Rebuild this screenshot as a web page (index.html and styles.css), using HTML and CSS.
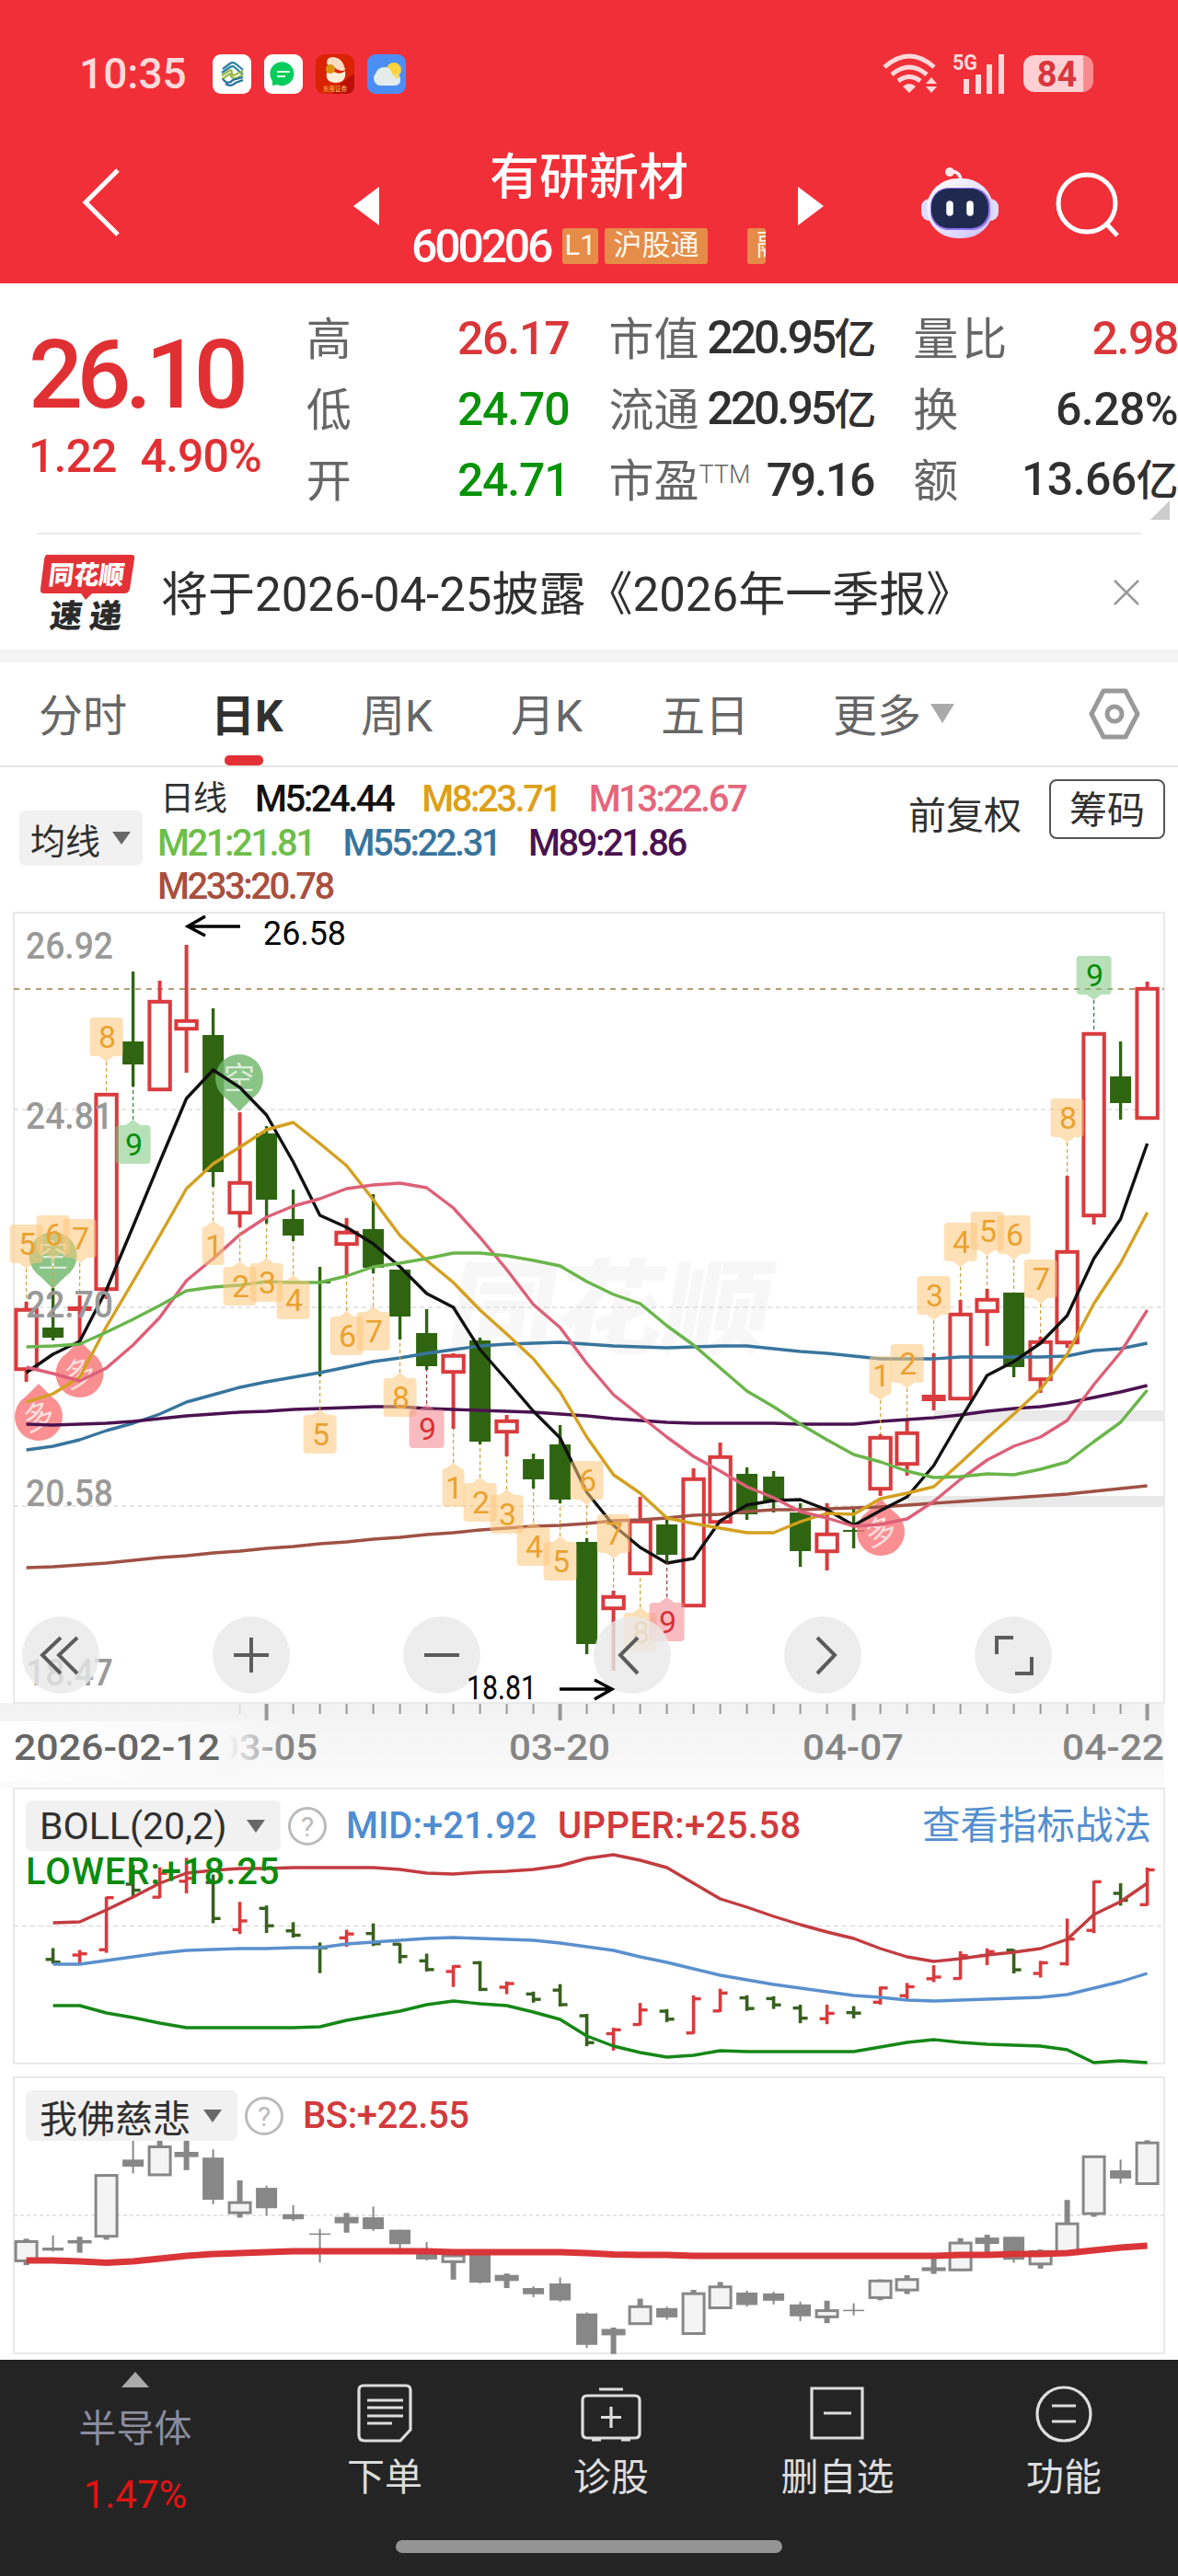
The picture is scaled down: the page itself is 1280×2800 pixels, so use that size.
FILE: index.html
```html
<!DOCTYPE html>
<html lang="zh-Hans">
<head>
    <meta charset="UTF-8">
    <meta name="viewport" content="width=device-width, initial-scale=1.0">
    <title>有研新材 600206</title>
    <link rel="stylesheet" href="styles.css">
</head>
<body>

<header class="header">
  <div class="status">
    <span class="clock">10:35</span>
    <div class="apps">
      <svg viewBox="0 0 42 43"><rect width="42" height="43" rx="9" fill="#fff"/><g fill="none" stroke-width="2.2"><path d="M11 16 19 10Q22 8 26 11L33 17M10 20 19 14Q22 12 25 15L33 22" stroke="#2880a4"/><path d="M10 23 18 18Q21 16 21 20T25 22L33 18M10 27 18 22Q20 20 20 23T26 26L33 22" stroke="#95b94a"/><path d="M11 27Q17 34 22 28L33 25M14 32Q20 36 25 31L33 28" stroke="#24709c"/></g></svg>
      <svg viewBox="0 0 42 43"><rect width="42" height="43" rx="9" fill="#fff"/><path d="M9 34V29A13 13 0 1 1 14 33Z" fill="#06cc5b"/><path d="M14 19h14M14 24h9" stroke="#d8ffe6" stroke-width="1.8"/></svg>
      <svg viewBox="0 0 42 43"><rect width="42" height="43" rx="9" fill="#d92303"/><path d="M28 31 42 21V34Q42 43 33 43H18Z" fill="#b90f08"/><path d="M12 9Q12 3 19 3Q30 4 32 17Q26 20 19 13Q13 14 12 9Z" fill="#fbdcc0"/><path d="M12 20Q14 16 20 19Q27 23 32 18Q34 31 21 31Q10 30 12 20Z" fill="#ffedd8"/><circle cx="16" cy="16" r="5" fill="#dc9410"/><text x="21" y="40" font-size="6.5" text-anchor="middle" fill="#ffc65c">东莞证券</text></svg>
      <svg viewBox="0 0 42 43"><rect width="42" height="43" rx="9" fill="#4d8ef5"/><circle cx="29" cy="17" r="8" fill="#fcd43c"/><path d="M14 34A8 8 0 0 1 9 21Q12 13 20 14Q26 15 27 21Q36 20 36 28Q36 34 29 34Z" fill="#e4ecec"/><path d="M27 21Q35 21 36 26Q30 28 27 21Z" fill="#f6dc70"/></svg>
    </div>
    <div class="signals">
      <svg width="60" height="44" viewBox="0 0 60 44" fill="none" stroke="#ffd9da" stroke-width="5"><path d="M2 15Q29-9 56 15M10 23Q29 7 48 23M17 30Q29 21 41 30"/><path d="M29 43 22 36Q29 30 36 36Z" fill="#ffd9da" stroke="none"/><path d="M47 33 53 26 59 33ZM47 36H59L53 43Z" fill="#ffd9da" stroke="none"/></svg>
      <svg width="58" height="44" viewBox="0 0 58 44" fill="#ffd9da"><text x="0" y="18" font-size="24" font-weight="700" textLength="27" lengthAdjust="spacingAndGlyphs">5G</text><path d="M12 28h6v16h-6zM25 23h6v21h-6zM37 12h6v32h-6zM50 1h6v43h-6z"/></svg>
      <span class="battery">84</span>
    </div>
  </div>
  <div class="titlebar">
    <svg class="back" viewBox="0 0 44 78"><path d="M40 4 5 39 40 74" fill="none" stroke="#fff" stroke-width="5"/></svg>
    <svg class="prev" viewBox="0 0 28 42"><path d="M28 0V42L0 21Z" fill="#fff"/></svg>
    <div class="stock">
      <div class="stock-name">有研新材</div>
      <div class="stock-sub"><b>600206</b><i class="tag l1">L1</i><i class="tag hgt">沪股通</i><i class="tag cut">融</i></div>
    </div>
    <svg class="next" viewBox="0 0 28 42"><path d="M0 0V42L28 21Z" fill="#fff"/></svg>
    <svg class="robot" viewBox="0 0 84 80"><defs><linearGradient id="face" x2="1" y2="1"><stop offset="0" stop-color="#fff"/><stop offset=".55" stop-color="#e6e0ff"/><stop offset="1" stop-color="#c9bcff"/></linearGradient></defs><path d="M43 17Q43 6 31 6" stroke="#f6e9f6" stroke-width="3.5" fill="none"/><circle cx="31" cy="7" r="5" fill="#ffe9ee"/><rect x="0" y="36" width="84" height="24" rx="9" fill="#e0dcff"/><rect x="6" y="14" width="72" height="65" rx="33" fill="url(#face)"/><rect x="10" y="24" width="65" height="46" rx="20" fill="#8c72ee"/><rect x="11" y="25" width="62" height="43" rx="19" fill="#202a50"/><path d="M31 42v9M53 42v9" stroke="#fff" stroke-width="7.5" stroke-linecap="round"/></svg>
    <svg class="search" viewBox="0 0 72 74"><circle cx="34" cy="35" r="31" fill="none" stroke="#fff" stroke-width="5"/><path d="M55 57 67 70" stroke="#fff" stroke-width="5"/></svg>
  </div>
</header>

<section class="quote">
  <div class="price">
    <div class="last">26.10</div>
    <div class="change"><span>1.22</span><span>4.90%</span></div>
  </div>
  <dl class="col c1">
    <div><dt>高</dt><dd class="up">26.17</dd></div>
    <div><dt>低</dt><dd class="down">24.70</dd></div>
    <div><dt>开</dt><dd class="down">24.71</dd></div>
  </dl>
  <dl class="col c2">
    <div><dt>市值</dt><dd>220.95<em>亿</em></dd></div>
    <div><dt>流通</dt><dd>220.95<em>亿</em></dd></div>
    <div><dt>市盈<sup>TTM</sup></dt><dd class="pe">79.16</dd></div>
  </dl>
  <dl class="col c3">
    <div><dt>量比</dt><dd class="up">2.98</dd></div>
    <div><dt>换</dt><dd>6.28%</dd></div>
    <div><dt>额</dt><dd>13.66<em>亿</em></dd></div>
  </dl>
  <span class="corner"></span>
</section>

<section class="news">
  <svg width="104" height="86" viewBox="0 0 104 86"><path d="M8 2H100Q104 2 103 7L98 39Q97 44 92 44H57L50 51 45 44H5Q0 44 1 39L5 7Q6 2 8 2Z" fill="#e33237"/><g transform="skewX(-7)" font-weight="900"><text x="13" y="34" font-size="28" fill="#fff" textLength="82" lengthAdjust="spacingAndGlyphs">同花顺</text><text x="20" y="81" font-size="35" fill="#2b2b2b" textLength="78">速递</text></g></svg>
  <p>将于2026-04-25披露《2026年一季报》</p>
  <svg width="28" height="28" viewBox="0 0 28 28"><path d="M1 1 27 27M27 1 1 27" stroke="#999" stroke-width="2.5"/></svg>
</section>

<nav class="tabs">
  <a>分时</a><a class="active">日K</a><a>周K</a><a>月K</a><a>五日</a><a class="more">更多</a>
  <svg width="56" height="56" viewBox="0 0 56 56" fill="none" stroke="#999" stroke-width="5"><path d="M16 3H40L53 28 40 53H16L3 28Z" stroke-linejoin="round"/><circle cx="28" cy="28" r="8"/></svg>
</nav>

<section class="legend">
  <span class="chip ma-chip">均线</span>
  <div class="ma">
    <div><span class="day">日线</span><span class="m5">M5:24.44</span><span class="m8">M8:23.71</span><span class="m13">M13:22.67</span></div>
    <div><span class="m21">M21:21.81</span><span class="m55">M55:22.31</span><span class="m89">M89:21.86</span></div>
    <div><span class="m233">M233:20.78</span></div>
  </div>
  <span class="fq">前复权</span>
  <span class="chouma">筹码</span>
</section>

<section class="kline">
  <svg id="kline" width="1280" height="956" viewBox="0 988 1280 956"></svg>
</section>

<section class="panel boll">
  <svg id="boll" width="1280" height="312" viewBox="0 1944 1280 312"></svg>
  <div class="panel-head">
    <span class="chip boll-chip">BOLL(20,2)</span><span class="help">?</span>
    <span class="mid">MID:+21.92</span><span class="upper">UPPER:+25.58</span>
    <a>查看指标战法</a>
  </div>
  <div class="lower">LOWER:+18.25</div>
</section>

<section class="panel bs">
  <svg id="bs" width="1280" height="309" viewBox="0 2256 1280 309"></svg>
  <div class="panel-head">
    <span class="chip bs-chip">我佛慈悲</span><span class="help">?</span>
    <span class="bs-value">BS:+22.55</span>
  </div>
</section>

<footer class="toolbar">
  <div class="items">
    <div class="sector"><i></i><span>半导体</span><b>1.47%</b></div>
    <div class="item"><svg viewBox="0 0 68 64"><path d="M11 2H57Q62 2 62 7V50L51 62H12Q6 62 6 56V7Q6 2 11 2ZM15 18H54M15 26H54M15 35H54M15 43H42"/></svg><span>下单</span></div>
    <div class="item"><svg viewBox="0 0 68 64"><path d="M21 6H47M8 13H60Q65 13 65 18V54Q65 59 60 59H8Q3 59 3 54V18Q3 13 8 13ZM34 25V48M23 36.500H45M13 61H23M45 61H55"/></svg><span>诊股</span></div>
    <div class="item"><svg viewBox="0 0 68 64"><path d="M6 5H61V59H6ZM19 32H49"/></svg><span>删自选</span></div>
    <div class="item"><svg viewBox="0 0 68 64"><circle cx="34" cy="33" r="29"/><path d="M21 24H47M21 41H47"/></svg><span>功能</span></div>
  </div>
  <div class="home"></div>
</footer>

<script src="charts.js"></script>
</body>
</html>
```
FILE: styles.css
```css
* {
  box-sizing: border-box;
}

body {
  margin: 0;
  width: 1280px;
  background: #fff;
  color: #303030;
  font-family: Roboto, "Noto Sans CJK SC", sans-serif;
}

svg {
  display: block;
  flex: none;
  overflow: visible;
}

i, em {
  font-style: normal;
}

/* 顶部 */
.header {
  height: 308px;
  background: #f12f38;
  color: #fff;
}

.status {
  display: flex;
  align-items: center;
  height: 160px;
  padding: 0 92px 0 86px;
}

.clock {
  width: 145px;
  font-size: 46px;
  font-weight: 500;
  color: #ffd9da;
}

.apps {
  display: flex;
  gap: 14px;
}

.apps svg {
  width: 42px;
  height: 43px;
}

.signals {
  display: flex;
  align-items: center;
  margin-left: auto;
  gap: 16px;
}

.signals svg + svg {
  margin-right: 3px;
}

.battery {
  width: 76px;
  height: 40px;
  padding-right: 3px;
  border-radius: 12px;
  background: linear-gradient(to right, #ffd0d3 65px, #f98b90 65px);
  color: #d9363e;
  font-size: 38px;
  font-weight: 700;
  line-height: 42px;
  text-align: center;
}

.titlebar {
  display: flex;
  height: 148px;
  padding-left: 88px;
}

.back {
  width: 44px;
  height: 78px;
  margin: 21px 252px 0 0;
}

.prev, .next {
  width: 28px;
  height: 42px;
  margin-top: 43px;
}

.stock {
  width: 455px;
}

.stock-name {
  height: 77px;
  padding-left: 1px;
  font-size: 54px;
  font-weight: 500;
  line-height: 67px;
  text-align: center;
}

.stock-sub {
  display: flex;
  align-items: center;
  height: 61px;
  padding-left: 35px;
}

.stock-sub b {
  width: 164px;
  font-size: 50px;
  font-weight: 500;
  letter-spacing: -3.2px;
}

.tag {
  height: 39px;
  margin-right: 7px;
  border-radius: 3px;
  background: #e58c49;
  color: #fff6e8;
  font-size: 31px;
  line-height: 38px;
  text-align: center;
  white-space: nowrap;
  overflow: hidden;
}

.l1 {
  width: 39px;
}

.hgt {
  width: 112px;
}

.cut {
  width: 20px;
  margin-left: 36px;
  padding-left: 10px;
  text-align: left;
}

.robot {
  width: 84px;
  height: 80px;
  margin: 20px 62px 0 106px;
}

.search {
  width: 72px;
  height: 74px;
  margin-top: 26px;
}

/* 报价 */
.quote {
  display: flex;
  position: relative;
  height: 271px;
}

.price {
  width: 333px;
  padding: 35px 0 0 31px;
  color: #e13033;
}

.last {
  height: 130px;
  font-size: 104px;
  font-weight: 500;
  line-height: 130px;
  letter-spacing: -6.6px;
}

.change {
  display: flex;
  gap: 26px;
  font-size: 50px;
  font-weight: 500;
  line-height: 46px;
  letter-spacing: -0.9px;
}

.col {
  margin: 21px 0 0;
}

.col > div {
  display: flex;
  justify-content: space-between;
  align-items: center;
  height: 77px;
}

.c1 {
  width: 286px;
  margin-right: 43px;
}

.c2 {
  width: 288px;
  margin-right: 43px;
}

.c3 {
  width: 288px;
}

dt {
  margin-top: -7px;
  color: #666;
  font-size: 49px;
  white-space: nowrap;
}

.c3 dt {
  letter-spacing: 4px;
}

dd {
  margin: 0;
  font-size: 50px;
  font-weight: 500;
  letter-spacing: -1.2px;
  line-height: 60px;
  white-space: nowrap;
}

.c2 dd {
  letter-spacing: -3px;
}

.c2 .pe {
  letter-spacing: -2.2px;
}

.c3 dd {
  letter-spacing: -0.6px;
}

.c3 .up {
  letter-spacing: -1.4px;
}

dd em {
  font-size: 46px;
}

sup {
  font-size: 27px;
  font-weight: 300;
  line-height: 0;
  vertical-align: 15px;
}

.up {
  color: #d9363a;
}

.down {
  color: #089208;
}

.corner {
  position: absolute;
  right: 9px;
  bottom: 14px;
  border-left: 21px solid transparent;
  border-bottom: 21px solid #ccc;
}

/* 公告 */
.news {
  display: flex;
  align-items: center;
  height: 127px;
  margin: 0 40px;
  padding: 0 2px 0 3px;
  border-top: 2px solid #ebebeb;
}

.news p {
  flex: 1;
  margin: -3px 0 0 28px;
  font-size: 51px;
  white-space: nowrap;
}

/* 周期 */
.tabs {
  display: flex;
  align-items: center;
  position: relative;
  height: 128px;
  padding: 0 0 0 42px;
  border-top: 14px solid #f4f4f4;
  border-bottom: 2px solid #e6e6e6;
  font-size: 48px;
  color: #666;
}

.tabs a {
  position: relative;
  top: -2px;
  width: 163px;
  white-space: nowrap;
}

.tabs a:first-child {
  width: 187px;
}

.tabs .active {
  color: #303030;
  font-weight: 700;
}

.active::after {
  content: "";
  position: absolute;
  left: 15px;
  bottom: -23px;
  width: 42px;
  height: 11px;
  border-radius: 5px;
  background: #e33035;
}

.tabs a:nth-child(5) {
  width: 187px;
}

.tabs .more {
  width: 278px;
}

.more::after {
  content: "";
  display: inline-block;
  margin: 0 0 9px 10px;
  border: 13px solid transparent;
  border-top: 21px solid #aaa;
  border-bottom: 0;
}

/* 均线 */
.legend {
  display: flex;
  height: 154px;
  padding-left: 21px;
}

.chip {
  display: flex;
  align-items: center;
  justify-content: space-between;
  border-radius: 7px;
  background: #f1f1f1;
  font-size: 41px;
  white-space: nowrap;
}

.chip::after {
  content: "";
  border: 10px solid transparent;
  border-top: 14px solid #686868;
  border-bottom: 0;
}

.ma-chip {
  width: 134px;
  height: 60px;
  margin: 47px 16px 0 0;
  padding: 0 13px 0 12px;
  font-size: 38px;
}

.ma {
  width: 816px;
  padding-top: 10px;
  font-size: 40px;
  font-weight: 500;
}

.ma div {
  display: flex;
  gap: 31px;
  height: 47.7px;
  line-height: 49px;
}

.ma span {
  letter-spacing: -2.5px;
  white-space: nowrap;
}

.ma .day {
  width: 75px;
  padding-left: 3px;
  font-size: 37px;
  font-weight: 400;
  letter-spacing: -1px;
}

.m5 { color: #111; }
.m8 { color: #dda019; }
.m13 { color: #e4667b; }
.m21 { color: #6dbf4a; }
.m55 { color: #38759d; }
.m89 { color: #4b1251; }
.m233 { color: #a94f3e; }

.fq {
  width: 153px;
  padding-top: 19px;
  font-size: 41px;
}

.chouma {
  width: 126px;
  height: 65px;
  margin-top: 13px;
  border: 2px solid #555;
  border-radius: 8px;
  font-size: 41px;
  line-height: 65px;
  text-align: center;
}

.kline svg {
  overflow: hidden;
}

/* 副图 */
.panel {
  position: relative;
}

.panel-head {
  display: flex;
  align-items: center;
  position: absolute;
  top: 13px;
  left: 28px;
  width: 1223px;
  height: 55px;
  font-size: 40px;
}

.boll .panel-head {
  line-height: 60px;
}

.panel-head a {
  margin-left: auto;
  color: #558fcf;
  font-size: 41.5px;
}

.bs .panel-head {
  top: 16px;
}

.boll-chip {
  width: 277px;
  height: 55px;
  padding: 0 17px 0 15px;
}

.bs-chip {
  width: 230px;
  height: 55px;
  padding: 0 17px 0 15px;
}

.help {
  width: 42px;
  height: 42px;
  margin: 0 21px 0 8px;
  border: 3px solid #bbb;
  border-radius: 50%;
  color: #bbb;
  font-size: 30px;
  line-height: 37px;
  text-align: center;
}

.mid {
  width: 230px;
  color: #508cd0;
  font-weight: 500;
}

.upper, .bs-value {
  color: #d13a3d;
  font-weight: 500;
}

.upper {
  letter-spacing: 0.4px;
}

.bs-value {
  letter-spacing: -0.4px;
}

.lower {
  position: absolute;
  top: 67px;
  left: 28px;
  color: #0b8b0e;
  font-size: 40px;
  font-weight: 500;
  letter-spacing: 0.9px;
}

/* 底部工具栏 */
.toolbar {
  height: 235px;
  background: #242424;
  color: #ddd;
}

.items {
  display: flex;
  height: 196px;
  padding-left: 24px;
}

.sector, .item {
  display: flex;
  flex-direction: column;
  align-items: center;
  width: 246px;
  font-size: 41px;
}

.sector {
  width: 271px;
  padding-right: 25px;
  color: #8a8b9d;
}

.sector i {
  margin-top: 13px;
  border: 15px solid transparent;
  border-bottom: 17px solid #aaa;
  border-top: 0;
}

.sector span {
  margin-top: 15px;
  line-height: 60px;
}

.sector b {
  margin-top: 17px;
  color: #e31212;
  font-weight: 400;
  font-size: 42px;
}

.item svg {
  width: 68px;
  height: 64px;
  margin-top: 26px;
  fill: none;
  stroke: #ddd;
  stroke-width: 3.2;
}

.item span {
  margin-top: 8px;
  line-height: 60px;
}

.home {
  width: 420px;
  height: 14px;
  margin: 0 auto;
  border-radius: 7px;
  background: #949494;
}
```
FILE: charts.js
```js
// [涨跌, 最高, 实体上沿, 实体下沿, 最低]
const candles = [
  ['r',1415,1422,1490,1502],['g',1400,1443,1454,1457],['r',1408,1420,1425,1458],['r',1188,1188,1403,1412],
  ['g',1056,1132,1157,1181],['r',1066,1087,1186,1186],['r',1027,1108,1120,1166],['g',1096,1125,1274,1290],
  ['r',1209,1284,1320,1334],['g',1224,1232,1304,1330],['g',1293,1325,1343,1349],['g',1377,1393,1395,1496],
  ['r',1324,1338,1354,1387],['g',1298,1336,1378,1384],['g',1380,1380,1431,1456],['g',1423,1449,1485,1489],
  ['r',1471,1472,1493,1553],['g',1454,1457,1567,1570],['r',1538,1543,1558,1583],['g',1580,1586,1608,1618],
  ['g',1549,1570,1630,1634],['g',1672,1676,1787,1798],['r',1729,1734,1750,1816],['r',1627,1652,1712,1712],
  ['g',1652,1657,1690,1698],['r',1596,1606,1747,1747],['r',1568,1582,1656,1656],['g',1595,1602,1646,1652],
  ['g',1599,1605,1631,1644],['g',1634,1644,1686,1703],['r',1634,1666,1688,1707],['g',1640,1663,1665,1683],
  ['r',1559,1561,1620,1626],['r',1544,1556,1593,1604],['r',1471,1516,1523,1533],['r',1413,1427,1522,1522],
  ['r',1401,1411,1427,1463],['g',1405,1405,1486,1497],['r',1453,1457,1501,1514],['r',1278,1359,1461,1465],
  ['r',1122,1122,1323,1331],['g',1132,1170,1199,1217],['r',1067,1073,1217,1217]
];

const lines = {
  '#38759d': [1576,1572,1565,1555,1547,1537,1524,1516,1508,1502,1497,1492,1486,1480,1476,1471,1467,1463,1461,1460,1459,1461,1463,1464,1465,1464,1463,1463,1466,1469,1471,1474,1477,1477,1477,1475,1475,1475,1475,1474,1468,1466,1460],
  '#4b1251': [1548,1549,1548,1547,1545,1542,1539,1537,1535,1534,1532,1531,1530,1529,1529,1531,1532,1533,1534,1535,1537,1539,1542,1544,1546,1547,1547,1547,1547,1548,1548,1548,1545,1543,1541,1538,1534,1531,1529,1525,1519,1513,1506],
  '#9f5144': [1704,1703,1701,1699,1696,1693,1691,1688,1686,1683,1681,1678,1676,1673,1671,1668,1666,1663,1661,1659,1658,1656,1653,1652,1650,1647,1646,1643,1641,1641,1640,1639,1638,1636,1634,1632,1630,1628,1626,1624,1621,1618,1615],
  '#111': [1492,1472,1458,1402,1333,1263,1194,1163,1182,1212,1263,1321,1334,1352,1377,1406,1421,1467,1500,1534,1563,1622,1658,1682,1699,1694,1653,1636,1631,1630,1641,1658,1642,1627,1593,1543,1495,1480,1460,1430,1368,1325,1243],
  '#d4a01f': [1524,1515,1497,1442,1393,1343,1292,1265,1247,1228,1220,1243,1267,1304,1343,1370,1394,1424,1450,1477,1513,1562,1603,1623,1650,1656,1661,1666,1666,1654,1645,1646,1629,1623,1616,1590,1563,1537,1510,1472,1417,1373,1318],
  '#dd6078': [1486,1493,1501,1487,1462,1432,1392,1368,1342,1323,1311,1303,1292,1288,1286,1291,1313,1345,1380,1418,1443,1482,1516,1539,1562,1583,1599,1616,1628,1643,1650,1659,1657,1651,1632,1608,1587,1572,1562,1544,1505,1470,1424],
  '#6ab54b': [1464,1463,1461,1448,1434,1419,1403,1399,1397,1393,1394,1394,1387,1377,1373,1368,1362,1362,1365,1370,1376,1393,1407,1417,1441,1462,1487,1512,1529,1548,1565,1581,1589,1599,1606,1605,1602,1603,1597,1589,1567,1546,1511]
};

// [K线序号, 数字, 方框上沿, 1=在K线上方 / 0=在下方]
const marks = [
  [0,5,1331,1],[1,6,1321,1],[2,7,1325,1],[3,8,1106,1],[4,9,1223,0,'g'],[7,1,1333,0],[8,2,1377,0],[9,3,1373,0],
  [10,4,1392,0],[11,5,1538,0],[12,6,1431,0],[13,7,1426,0],[14,8,1498,0],[15,9,1532,0,'r'],[16,1,1596,0],
  [17,2,1612,0],[18,3,1625,0],[19,4,1660,0],[20,5,1676,0],[21,6,1588,1],[22,7,1646,1],[23,8,1753,0],
  [24,9,1742,0,'r'],[32,1,1474,1],[33,2,1461,1],[34,3,1387,1],[35,4,1329,1],[36,5,1317,1],[37,6,1321,1],
  [38,7,1369,1],[39,8,1194,1],[40,9,1039,1,'g']
];

const RED = '#d93b3e', GREEN = '#2f6511';
const X = i => 28.6 + 29 * i;

const rect = (x, y, w, h, fill, more = '') => `<rect x="${x}" y="${y}" width="${w}" height="${h}" fill="${fill}" ${more}/>`;
const line = (x1, y1, x2, y2, c, w, more = '') => `<line x1="${x1}" y1="${y1}" x2="${x2}" y2="${y2}" stroke="${c}" stroke-width="${w}" ${more}/>`;
const text = (x, y, s, size, c, len, more = '') =>
  `<text x="${x}" y="${y}" font-size="${size}" fill="${c}" ${len ? `textLength="${len}" lengthAdjust="spacingAndGlyphs"` : ''} ${more}>${s}</text>`;
const poly = (ys, c, w, from = 0) =>
  `<polyline points="${ys.map((y, i) => X(i + from).toFixed(1) + ',' + y).join(' ')}" fill="none" stroke="${c}" stroke-width="${w}" stroke-linejoin="round"/>`;
const frame = (y, h) => rect(15, y, 1250, h, 'none', 'stroke="#e9e9e9" stroke-width="2"');

function drawKline() {
  let s = rect(0, 1851, 1265, 93, 'url(#axis)') + frame(992, 859);
  s = '<defs><linearGradient id="axis" x2="0" y2="1"><stop offset="0" stop-color="#f2f2f2"/><stop offset="1" stop-color="#fbfbfb"/></linearGradient>' +
    '<linearGradient id="fade"><stop offset="0" stop-color="#fff"/><stop offset=".8" stop-color="#f8f8f8"/><stop offset="1" stop-color="#f8f8f8" stop-opacity="0"/></linearGradient></defs>' + s;
  s += text(470, 1463, '同花顺', 112, '#f7f7f7', 350, 'font-weight="900" transform="translate(270 0) skewX(-10)"');
  [1206, 1421, 1637].forEach(y => s += line(15, y, 1265, y, '#ddd', 1.5, 'stroke-dasharray="5 4"'));
  s += line(15, 1075, 1265, 1075, '#b59c75', 2, 'stroke-dasharray="6 6"');
  s += rect(1015, 1533, 250, 12, '#e9e9e9') + rect(986, 1626, 279, 12, '#e9e9e9');

  candles.forEach(([k, hi, top, bot, lo], i) => {
    const x = X(i);
    if (k === 'g') {
      s += line(x, hi, x, lo, GREEN, 3.4) + rect(x - 11.5, top, 23, bot - top, GREEN);
    } else {
      s += line(x, hi, x, top, RED, 4) + line(x, bot, x, lo, RED, 4);
      s += bot - top < 9 ? rect(x - 13, top, 26, bot - top, RED)
        : rect(x - 11.2, top + 1.8, 22.4, bot - top - 3.6, '#fff', `stroke="${RED}" stroke-width="4"`);
    }
  });

  bubble(57.5, 1365, '空', 1);
  bubble(260, 1172, '空', 1);
  bubble(42, 1540, '多', 0);
  bubble(86.5, 1493, '多', 0);
  bubble(957, 1665, '多', 0);

  for (const c in lines) s += poly(lines[c], c, 3.4);

  marks.forEach(([i, n, y, above, kind]) => {
    const x = X(i), w = n === 1 ? 24 : kind ? 38 : 36;
    const box = kind === 'g' ? '#7bc77d' : kind === 'r' ? '#f2858c' : '#fdc77c';
    const ink = kind === 'g' ? '#068d0c' : kind === 'r' ? '#d43236' : '#eaa22f';
    const tip = above ? y + 48 : y - 6;
    s += line(x, tip, x, above ? candles[i][1] : candles[i][4], kind === 'g' ? '#2c8b3a' : kind === 'r' ? '#99454a' : '#cda64a', 1.3, 'stroke-dasharray="4 3"');
    s += `<g fill="${box}" fill-opacity=".55"><path d="M${x - w / 2 + 4} ${y}${above ? '' : `H${x - 8}L${x} ${tip} ${x + 8} ${y}`}H${x + w / 2 - 4}q4 0 4 4v34q0 4-4 4${above ? `H${x + 8}L${x} ${tip} ${x - 8} ${y + 42}` : ''}H${x - w / 2 + 4}q-4 0-4-4v-34q0-4 4-4z"/></g>`;
    s += text(x + 1, y + 33, n, 34, ink, 0, 'text-anchor="middle"');
  });

  [['26.92', 1042], ['24.81', 1227], ['22.70', 1432], ['20.58', 1637], ['18.47', 1832]].forEach(([p, y]) =>
    s += text(28, y, p, 41, '#999', 95, 'font-weight="500"'));

  // 操作按钮
  const icons = [
    'M0-19-20 0 0 20M18-19-2 0 18 20', 'M-19 0H19M0-19V19', 'M-19 0H19',
    'M6-19-13 0 6 20', 'M-6-19 13 0-6 20', 'M0-19H-18V-1M2 20H20V2'
  ];
  icons.forEach((d, n) => s += `<g transform="translate(${66 + 207 * n} 1799)"><circle r="42" fill="#e9e9e9" fill-opacity=".8"/><path d="${d}" fill="none" stroke="#5c5c5c" stroke-width="4"/></g>`);

  s += '<path d="M261 1007H204M223 996 204 1007 223 1017M608 1836H665M646 1826 665 1836 646 1847" fill="none" stroke="#000" stroke-width="3.4"/>';
  s += text(286, 1027, '26.58', 36, '#000', 90) + text(507, 1847, '18.81', 36, '#000', 76);

  for (let i = 8; i < 43; i++) {
    const big = i % 11 === 9;
    s += line(X(i), 1852, X(i), big ? 1870 : 1863, i === 8 ? '#ddd' : '#999', big ? 4 : 2);
  }
  const date = (x, t, w) => text(x, 1913, t, 38, '#858585', w, 'font-weight="500"');
  s += date(236, '03-05', 109) + date(553, '03-20', 110) + date(872, '04-07', 110) + date(1154, '04-22', 111);
  s += rect(0, 1871, 310, 66, 'url(#fade)');
  s += text(15, 1913, '2026-02-12', 38, '#666', 224, 'font-weight="500"');
  document.getElementById('kline').innerHTML = s;

  function bubble(x, y, t, down) {
    const tip = down ? y + 36 : y - 36, a = down ? 20 : -20;
    s += `<g opacity=".82"><circle cx="${x}" cy="${y}" r="26" fill="${down ? '#71b96d' : '#f97779'}"/><path d="M${x - 16} ${y + a}L${x} ${tip}L${x + 16} ${y + a}Z" fill="${down ? '#71b96d' : '#f97779'}"/></g>`;
    s += text(x, y + 12, t, 34, '#fff', 0, `text-anchor="middle" opacity=".7" ${down ? '' : `transform="rotate(-18 ${x} ${y})"`}`);
  }
}

function drawBoll() {
  const Y = y => 2033 + (y - 1075) * 0.263;
  let s = frame(1944, 299) + line(15, 2093.5, 1265, 2093.5, '#ddd', 1.5, 'stroke-dasharray="5 4"');
  candles.forEach(([k, hi, top, bot, lo], i) => {
    if (!i) return;
    const x = X(i), c = k === 'r' ? RED : '#38601f';
    const open = Y(k === 'r' ? bot : top), close = Y(k === 'r' ? top : bot);
    s += line(x, Y(hi) - 1, x, Y(lo) + 1, c, 3.6) + line(x - 8, open, x, open, c, 3.4) + line(x, close, x + 8, close, c, 3.4);
  });
  s += poly([2090,2089,2076,2062,2047,2036,2033,2031,2031,2030,2030,2030,2030,2032,2036,2037,2035,2034,2032,2028,2020,2016,2022,2030,2047,2064,2073,2083,2092,2100,2107,2118,2127,2132,2129,2125,2122,2118,2108,2081,2067,2047], '#c23c40', 3.4, 1);
  s += poly([2135,2135,2131,2127,2123,2120,2119,2118,2118,2117,2117,2113,2111,2109,2107,2106,2107,2108,2109,2112,2116,2120,2127,2133,2140,2147,2152,2157,2161,2165,2169,2171,2174,2175,2174,2173,2172,2171,2168,2161,2154,2145], '#5a90cd', 3.4, 1);
  s += poly([2180,2180,2188,2193,2199,2204,2204,2204,2204,2204,2203,2196,2191,2186,2179,2175,2178,2180,2187,2195,2213,2224,2231,2236,2234,2229,2230,2230,2230,2230,2230,2225,2220,2217,2220,2222,2223,2224,2228,2242,2240,2242], '#158717', 3.4, 1);
  document.getElementById('boll').innerHTML = s;
}

function drawBs() {
  const Y = y => 2373.5 + (y - 1217) * 0.3075;
  const C = '#878787';
  let s = frame(2258, 300) + line(15, 2408, 1265, 2408, '#ddd', 1.5, 'stroke-dasharray="4 3"');
  candles.forEach(([k, hi, top, bot, lo], i) => {
    const x = X(i), t = Y(top), h = Y(bot) - t;
    if (k === 'g') {
      s += line(x, Y(hi), x, Y(lo), C, 2) + rect(x - 11.5, t, 23, Math.max(h, 1.5), C);
    } else {
      s += line(x, Y(hi) - 1, x, t, C, 6) + line(x, t + h, x, Y(lo) + 1, C, 6);
      s += h < 6 ? rect(x - 13, t - 1, 26, h + 2, C) : rect(x - 11.5, t, 23, h, '#f4f4f4', `stroke="${C}" stroke-width="3"`);
    }
  });
  s += poly([2457,2457,2458,2459.5,2458,2455,2452,2450,2449,2448,2447,2447,2447,2447,2447,2447,2448,2448,2448,2448,2448,2449,2450.5,2451,2451,2452,2452,2452,2452,2452,2452,2452,2452,2452,2452,2451,2451,2450,2450,2449,2446,2443,2441], '#da3538', 7);
  document.getElementById('bs').innerHTML = s;
}

drawKline();
drawBoll();
drawBs();
```
